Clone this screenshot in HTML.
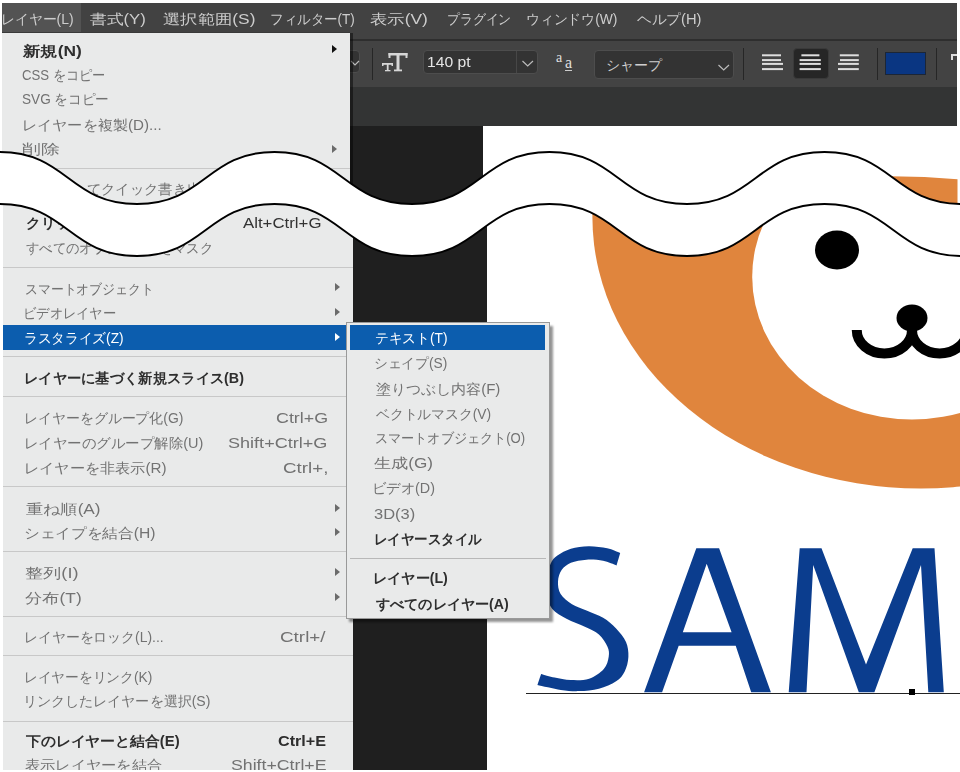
<!DOCTYPE html>
<html lang="ja"><head><meta charset="utf-8">
<style>
html,body{margin:0;padding:0;}
body{width:960px;height:772px;position:relative;overflow:hidden;background:#fff;font-family:"Liberation Sans",sans-serif;}
.abs,.t,.ar,.sep,.hl{position:absolute;}
.layer{position:absolute;left:0;top:0;width:960px;height:772px;}
.t{height:20px;line-height:20px;font-size:14px;color:#727272;white-space:nowrap;transform-origin:0 50%;}
.t.b{color:#2e2e2e;font-weight:bold;}
.t.w{color:#fff;}
.t.d{color:#333;}
.t.sc{font-size:15.5px;}
.t.mb{color:#cdcdcd;}
.ar{width:0;height:0;border-top:4.5px solid transparent;border-bottom:4.5px solid transparent;border-left:5px solid #666;}
.sep{height:1px;}
.hl{background:#0c5dae;}
.sam{font-size:200px;line-height:300px;color:#0b3d8e;transform-origin:0 0;white-space:nowrap;}
</style></head><body>
<div class="layer" style="clip-path:inset(0 0 568px 0)">
  <div class="abs" style="left:2px;top:3px;width:955px;height:36px;background:#424242"></div>
  <div class="abs" style="left:2px;top:39px;width:955px;height:1.6px;background:#2e2e2e"></div>
  <div class="abs" style="left:2px;top:3px;width:79px;height:30px;background:#535353"></div>
  <div class="abs" style="left:2px;top:40.6px;width:955px;height:46.4px;background:#434343"></div>
  <div class="abs" style="left:2px;top:87px;width:955px;height:39px;background:#333434"></div>
  <div class="abs" style="left:2px;top:126px;width:955px;height:646px;background:#1f1f1f"></div>
  <div class="abs" style="left:483px;top:126px;width:474px;height:646px;background:#fff"></div>
  <!-- toolbar -->
  <div class="abs" style="left:320px;top:50px;width:40px;height:23px;box-sizing:border-box;border:1px solid #4d4d4d;border-radius:4px;background:#333"></div>
  <svg class="abs" style="left:350px;top:55px" width="12" height="14"><path d="M1,6 L5,10 L9,6" fill="none" stroke="#bbb" stroke-width="1.2"/></svg>
  <div class="abs" style="left:372px;top:48px;width:1px;height:32px;background:#262626"></div>
  <svg class="abs" style="left:378px;top:50px" width="34" height="24">
    <g fill="#d6d6d6">
      <rect x="10.5" y="3" width="19" height="2.5"/><rect x="10.5" y="3" width="2" height="5"/><rect x="27.5" y="3" width="2" height="5"/>
      <rect x="18.5" y="3" width="3" height="18"/><rect x="16" y="19.5" width="8" height="1.8"/>
      <rect x="4" y="13" width="11" height="1.8"/><rect x="4" y="13" width="1.5" height="3"/><rect x="13.5" y="13" width="1.5" height="3"/>
      <rect x="8.8" y="13" width="1.8" height="8"/><rect x="7" y="20" width="5.5" height="1.3"/>
    </g>
  </svg>
  <div class="abs" style="left:423px;top:50px;width:115px;height:24px;box-sizing:border-box;border:1px solid #4d4d4d;border-radius:4px;background:#333"></div>
  <div class="abs" style="left:516px;top:51px;width:1px;height:22px;background:#474747"></div>
  <svg class="abs" style="left:520px;top:56px" width="16" height="12"><path d="M2.5,5 L7.7,10 L13,5" fill="none" stroke="#bbb" stroke-width="1.2"/></svg>
  <div class="abs" style="left:427px;top:53px;font-size:14px;line-height:18px;color:#e4e4e4;transform:scaleX(1.12);transform-origin:0 0">140 pt</div>
  <div class="abs" style="left:556px;top:51px;font-family:'Liberation Serif',serif;font-size:14px;line-height:14px;color:#e0e0e0">a</div>
  <div class="abs" style="left:565px;top:56px;font-family:'Liberation Serif',serif;font-size:16px;line-height:14px;color:#e0e0e0;border-bottom:1.2px solid #ccc">a</div>
  <div class="abs" style="left:594px;top:50px;width:140px;height:29px;box-sizing:border-box;border:1px solid #4d4d4d;border-radius:4px;background:#333"></div>
  <div class="abs" style="left:606px;top:55px;font-size:14px;line-height:20px;color:#cfcfcf">シャープ</div>
  <svg class="abs" style="left:716px;top:60px" width="16" height="12"><path d="M2.5,5 L7.7,10 L13,5" fill="none" stroke="#bbb" stroke-width="1.2"/></svg>
  <div class="abs" style="left:743px;top:48px;width:1px;height:32px;background:#262626"></div>
  <div class="abs" style="left:793px;top:48px;width:36px;height:31px;box-sizing:border-box;background:#262626;border:1px solid #3a3a3a;border-radius:4px"></div>
  <svg class="abs" style="left:755px;top:50px" width="110" height="26">
    <g fill="#dedede">
      <rect x="7" y="4.3" width="19" height="2"/><rect x="7" y="9.1" width="19" height="2"/><rect x="7" y="12.9" width="21" height="2"/><rect x="7" y="18.1" width="21" height="2"/>
      <rect x="46.4" y="4.3" width="18" height="2"/><rect x="44.6" y="9.1" width="21.2" height="2"/><rect x="44.6" y="12.9" width="21.2" height="2"/><rect x="44.6" y="18.1" width="21.2" height="2"/>
      <rect x="84.8" y="4.3" width="19" height="2"/><rect x="85" y="9.1" width="18.8" height="2"/><rect x="83" y="12.9" width="20.8" height="2"/><rect x="83" y="18.1" width="20.8" height="2"/>
    </g>
  </svg>
  <div class="abs" style="left:877px;top:48px;width:1px;height:32px;background:#262626"></div>
  <div class="abs" style="left:885px;top:51.5px;width:41px;height:23px;box-sizing:border-box;background:#0a3682;border:1px solid #1c2636"></div>
  <div class="abs" style="left:936px;top:48px;width:1px;height:32px;background:#262626"></div>
  <div class="abs" style="left:951px;top:54px;width:8px;height:2px;background:#ddd"></div>
  <div class="abs" style="left:951px;top:54px;width:2px;height:6px;background:#ddd"></div>
  <div class="abs" style="left:957px;top:0;width:3px;height:200px;background:#fff"></div>
  <!-- top menu panel -->
  <div class="abs" style="left:350px;top:33px;width:3px;height:180px;background:rgba(0,0,0,0.45)"></div>
  <div class="abs" style="left:2px;top:32px;width:348px;height:1px;background:#3a3a3a"></div>
  <div class="abs" style="left:2px;top:33px;width:348px;height:300px;background:#e9eaea"></div>
  <div class="t mb" id="t0" style="top:8.5px;left:1.01px;transform:scaleX(0.9929)">レイヤー(L)</div>
<div class="t mb" id="t1" style="top:8.5px;left:90.00px;transform:scaleX(1.1957)">書式(Y)</div>
<div class="t mb" id="t2" style="top:8.5px;left:163.16px;transform:scaleX(1.2384)">選択範囲(S)</div>
<div class="t mb" id="t3" style="top:8.5px;left:270.07px;transform:scaleX(0.9647)">フィルター(T)</div>
<div class="t mb" id="t4" style="top:8.5px;left:369.76px;transform:scaleX(1.2400)">表示(V)</div>
<div class="t mb" id="t5" style="top:8.5px;left:446.58px;transform:scaleX(0.9191)">プラグイン</div>
<div class="t mb" id="t6" style="top:8.5px;left:525.72px;transform:scaleX(0.9878)">ウィンドウ(W)</div>
<div class="t mb" id="t7" style="top:8.5px;left:637.00px;transform:scaleX(1.0492)">ヘルプ(H)</div>
<div class="t b" id="t8" style="top:41.0px;left:23.00px;transform:scaleX(1.2394)">新規(N)</div>
<div class="t " id="t9" style="top:65.0px;left:22.06px;transform:scaleX(0.9425)">CSS をコピー</div>
<div class="t " id="t10" style="top:89.0px;left:22.03px;transform:scaleX(0.9713)">SVG をコピー</div>
<div class="t " id="t11" style="top:114.7px;left:21.59px;transform:scaleX(1.0813)">レイヤーを複製(D)...</div>
<div class="t " id="t12" style="top:139.0px;left:22.40px;transform:scaleX(1.3462)">削除</div>
<div class="t " id="t13" style="top:178.8px;left:22.73px;transform:scaleX(1.0230)">PNG としてクイック書き出し</div>

  <div class="ar" style="top:44.5px;left:332px;border-left-color:#111"></div>
<div class="ar" style="top:144.5px;left:332px;border-left-color:#6b6b6b"></div>
<div class="sep" style="top:167.5px;left:2px;width:348px;background:#c8c8c8"></div>

  <svg class="abs" style="left:0;top:0" width="960" height="230"><path d="M891,176.3 Q925,176.4 957.5,179.2 L957.5,215 L891,215 Z" fill="#e0853d"/></svg>
</div>
<div class="layer" style="clip-path:inset(204px 0 0 0)">
  <div class="abs" style="left:0;top:0;width:960px;height:772px;background:#fff"></div>
  <div class="abs" style="left:3px;top:126px;width:954px;height:644px;background:#1f1f1f"></div>
  <div class="abs" style="left:487px;top:126px;width:473px;height:646px;background:#fff"></div>
  <svg class="abs" style="left:0;top:0" width="960" height="772">
    <ellipse cx="920.9" cy="217.1" rx="328.5" ry="271.4" fill="#e0853d"/>
    <ellipse cx="911.9" cy="276.7" rx="159.7" ry="142.9" fill="#fff"/>
    <ellipse cx="837" cy="250" rx="22" ry="19.5" fill="#000"/>
    <ellipse cx="912" cy="318" rx="15.5" ry="13.5" fill="#000"/>
    <path d="M856.75,330 A27.6,23.5 0 0 0 912,330 A27.6,23.5 0 0 0 967.25,330" fill="none" stroke="#000" stroke-width="10"/>
  </svg>
  <svg class="abs" style="left:0;top:0" width="960" height="772">
    <path d="M620.2,553.0 C618.0,552.2 612.5,549.4 607.2,548.3 C601.9,547.2 594.7,546.1 588.6,546.2 C582.5,546.3 576.1,547.2 570.9,548.8 C565.7,550.4 560.8,553.1 557.4,555.6 C554.0,558.1 552.3,559.9 550.5,564.0 C548.7,568.1 547.0,574.7 546.5,580.0 C546.0,585.3 546.5,591.2 547.5,596.0 C548.5,600.8 549.1,605.2 552.3,609.0 C555.5,612.8 561.0,615.8 566.5,618.8 C572.0,621.8 580.0,624.5 585.4,627.1 C590.8,629.7 595.2,631.2 598.9,634.5 C602.6,637.8 605.9,643.1 607.5,646.8 C609.1,650.5 609.3,653.0 608.7,656.7 C608.1,660.4 607.1,665.3 603.8,669.0 C600.5,672.7 594.6,676.9 589.1,678.8 C583.6,680.6 576.4,680.3 570.6,680.1 C564.9,679.9 559.5,678.6 554.6,677.6 C549.7,676.6 543.4,674.5 541.1,673.9 C540.5,675.8 538.0,683.1 537.4,685.0 C541.3,685.8 553.8,688.9 560.8,689.9 C567.8,690.9 572.9,691.3 579.2,691.1 C585.6,690.9 592.8,690.3 598.9,688.7 C605.0,687.1 611.8,684.2 616.1,681.3 C620.4,678.4 622.7,675.5 624.7,671.4 C626.8,667.3 628.2,661.6 628.4,656.7 C628.6,651.8 628.0,646.6 626.0,641.9 C624.0,637.2 619.9,632.4 616.1,628.4 C612.3,624.4 608.0,620.8 603.1,617.8 C598.2,614.8 591.7,612.8 586.5,610.5 C581.3,608.2 576.3,607.0 572.0,604.3 C567.7,601.5 562.9,597.8 560.6,594.0 C558.3,590.2 557.8,585.5 558.0,581.5 C558.2,577.5 559.5,573.2 561.6,570.1 C563.8,567.0 566.8,564.5 570.9,562.8 C575.0,561.1 581.1,560.1 586.5,559.7 C591.9,559.4 598.1,559.8 603.1,560.7 C608.1,561.7 614.4,564.6 616.6,565.4 C617.2,563.3 619.6,555.1 620.2,553.0 Z" fill="#0b3d8e"/>
    <path fill-rule="evenodd" fill="#0b3d8e" d="M644.1,692.3 L696.3,548.3 L719.1,548.3 L770.9,692.3 L751.2,692.3 L735.7,645.7 L678.7,645.7 L662.1,692.3 Z M706.7,563.8 L731.6,632.2 L682.8,632.2 Z"/>
    <path fill="#0b3d8e" d="M788.7,692.3 L799.7,548.3 L821.5,548.3 L866,664.4 L912.7,548.3 L934.5,548.3 L943.8,692.3 L928.3,692.3 L921,564.9 L874.4,692.3 L858.8,692.3 L813.2,564.9 L806.5,692.3 Z"/>
  </svg>
  <div class="abs" style="left:526px;top:692.5px;width:434px;height:1px;background:#222"></div>
  <div class="abs" style="left:909px;top:689px;width:6px;height:6px;background:#000"></div>
  <div class="abs" style="left:3px;top:150px;width:350px;height:620px;background:#e9eaea"></div>
  <div class="sep" style="top:266.5px;left:3px;width:350px;background:#c8c8c8"></div>
<div class="sep" style="top:356.0px;left:3px;width:350px;background:#c8c8c8"></div>
<div class="sep" style="top:395.6px;left:3px;width:350px;background:#c8c8c8"></div>
<div class="sep" style="top:485.6px;left:3px;width:350px;background:#c8c8c8"></div>
<div class="sep" style="top:551.0px;left:3px;width:350px;background:#c8c8c8"></div>
<div class="sep" style="top:615.6px;left:3px;width:350px;background:#c8c8c8"></div>
<div class="sep" style="top:655.0px;left:3px;width:350px;background:#c8c8c8"></div>
<div class="sep" style="top:720.6px;left:3px;width:350px;background:#c8c8c8"></div>
<div class="ar" style="top:283.0px;left:334.5px;border-left-color:#6b6b6b"></div>
<div class="ar" style="top:307.5px;left:334.5px;border-left-color:#6b6b6b"></div>
<div class="ar" style="top:503.5px;left:334.5px;border-left-color:#6b6b6b"></div>
<div class="ar" style="top:527.5px;left:334.5px;border-left-color:#6b6b6b"></div>
<div class="ar" style="top:568.0px;left:334.5px;border-left-color:#6b6b6b"></div>
<div class="ar" style="top:592.5px;left:334.5px;border-left-color:#6b6b6b"></div>

  <div class="hl" style="left:3px;top:325px;width:347px;height:25px"></div><div class="ar" style="top:332.5px;left:334.5px;border-left-color:#fff"></div>

  <div class="t b" id="t14" style="top:212.5px;left:25.96px;transform:scaleX(1.0359)">クリッピングマスクを作成</div>
<div class="t d sc" id="t15" style="top:212.5px;left:242.70px;transform:scaleX(1.0844)">Alt+Ctrl+G</div>
<div class="t " id="t16" style="top:237.7px;left:26.25px;transform:scaleX(0.9536)">すべてのオブジェクトをマスク</div>
<div class="t " id="t17" style="top:278.6px;left:25.33px;transform:scaleX(0.9191)">スマートオブジェクト</div>
<div class="t " id="t18" style="top:303.0px;left:23.40px;transform:scaleX(0.9495)">ビデオレイヤー</div>
<div class="t w" id="t19" style="top:327.5px;left:24.30px;transform:scaleX(0.9773)">ラスタライズ(Z)</div>
<div class="t b" id="t20" style="top:367.5px;left:24.21px;transform:scaleX(1.0209)">レイヤーに基づく新規スライス(B)</div>
<div class="t " id="t21" style="top:407.5px;left:24.26px;transform:scaleX(0.9952)">レイヤーをグループ化(G)</div>
<div class="t sc" id="t22" style="top:407.5px;left:275.55px;transform:scaleX(1.1512)">Ctrl+G</div>
<div class="t " id="t23" style="top:432.5px;left:24.18px;transform:scaleX(1.0336)">レイヤーのグループ解除(U)</div>
<div class="t sc" id="t24" style="top:432.5px;left:228.33px;transform:scaleX(1.1651)">Shift+Ctrl+G</div>
<div class="t " id="t25" style="top:458.0px;left:24.08px;transform:scaleX(1.0853)">レイヤーを非表示(R)</div>
<div class="t sc" id="t26" style="top:458.0px;left:282.59px;transform:scaleX(1.2114)">Ctrl+,</div>
<div class="t " id="t27" style="top:499.0px;left:26.25px;transform:scaleX(1.2292)">重ね順(A)</div>
<div class="t " id="t28" style="top:522.5px;left:24.01px;transform:scaleX(1.1196)">シェイプを結合(H)</div>
<div class="t " id="t29" style="top:563.0px;left:24.95px;transform:scaleX(1.2987)">整列(I)</div>
<div class="t " id="t30" style="top:588.0px;left:25.01px;transform:scaleX(1.2352)">分布(T)</div>
<div class="t " id="t31" style="top:627.0px;left:24.27px;transform:scaleX(0.9917)">レイヤーをロック(L)...</div>
<div class="t sc" id="t32" style="top:627.0px;left:279.98px;transform:scaleX(1.2162)">Ctrl+/</div>
<div class="t " id="t33" style="top:666.7px;left:24.29px;transform:scaleX(0.9816)">レイヤーをリンク(K)</div>
<div class="t " id="t34" style="top:690.7px;left:23.24px;transform:scaleX(1.0041)">リンクしたレイヤーを選択(S)</div>
<div class="t b" id="t35" style="top:730.5px;left:26.25px;transform:scaleX(1.0622)">下のレイヤーと結合(E)</div>
<div class="t b sc" id="t36" style="top:730.5px;left:278.26px;transform:scaleX(1.0422)">Ctrl+E</div>
<div class="t " id="t37" style="top:754.5px;left:25.16px;transform:scaleX(1.0883)">表示レイヤーを結合</div>
<div class="t sc" id="t38" style="top:754.5px;left:231.36px;transform:scaleX(1.1427)">Shift+Ctrl+E</div>

  <div class="abs" style="left:349px;top:326px;width:204px;height:296px;background:rgba(0,0,0,0.42);filter:blur(1px)"></div>
  <div class="abs" style="left:346px;top:322px;width:204px;height:297px;box-sizing:border-box;background:#e9eaea;border:1px solid #999"></div>
  <div class="hl" style="left:350px;top:324.6px;width:195px;height:25.4px"></div><div class="sep" style="top:558.0px;left:350px;width:196px;background:#b8b8b8"></div>

  <div class="t w" id="t39" style="top:327.5px;left:374.52px;transform:scaleX(0.9819)">テキスト(T)</div>
<div class="t " id="t40" style="top:353.0px;left:373.54px;transform:scaleX(0.9819)">シェイプ(S)</div>
<div class="t " id="t41" style="top:378.6px;left:375.50px;transform:scaleX(1.0730)">塗りつぶし内容(F)</div>
<div class="t " id="t42" style="top:403.5px;left:375.50px;transform:scaleX(0.9871)">ベクトルマスク(V)</div>
<div class="t " id="t43" style="top:428.0px;left:374.56px;transform:scaleX(0.9373)">スマートオブジェクト(O)</div>
<div class="t " id="t44" style="top:453.0px;left:374.28px;transform:scaleX(1.2239)">生成(G)</div>
<div class="t " id="t45" style="top:478.0px;left:372.43px;transform:scaleX(1.0241)">ビデオ(D)</div>
<div class="t " id="t46" style="top:504.0px;left:374.32px;transform:scaleX(1.1758)">3D(3)</div>
<div class="t b" id="t47" style="top:528.6px;left:373.57px;transform:scaleX(0.9627)">レイヤースタイル</div>
<div class="t b" id="t48" style="top:568.0px;left:373.47px;transform:scaleX(1.0127)">レイヤー(L)</div>
<div class="t b" id="t49" style="top:593.7px;left:375.50px;transform:scaleX(1.0099)">すべてのレイヤー(A)</div>

  <div class="abs" style="left:0;top:770px;width:960px;height:2px;background:#fff"></div>
</div>
<svg class="layer" width="960" height="772" style="position:absolute;left:0;top:0">
  <path d="M-275.50,152.00 C-207.50,152.00 -206.00,204.00 -138.00,204.00 C-70.00,204.00 -68.50,152.00 -0.50,152.00 C67.50,152.00 69.00,204.00 137.00,204.00 C205.00,204.00 206.50,152.00 274.50,152.00 C342.50,152.00 344.00,204.00 412.00,204.00 C480.00,204.00 481.50,152.00 549.50,152.00 C617.50,152.00 619.00,204.00 687.00,204.00 C755.00,204.00 756.50,152.00 824.50,152.00 C892.50,152.00 894.00,204.00 962.00,204.00 C1030.00,204.00 1031.50,152.00 1099.50,152.00 C1167.50,152.00 1169.00,204.00 1237.00,204.00 C1305.00,204.00 1306.50,152.00 1374.50,152.00 L1374.50,204.00 C1306.50,204.00 1305.00,256.00 1237.00,256.00 C1169.00,256.00 1167.50,204.00 1099.50,204.00 C1031.50,204.00 1030.00,256.00 962.00,256.00 C894.00,256.00 892.50,204.00 824.50,204.00 C756.50,204.00 755.00,256.00 687.00,256.00 C619.00,256.00 617.50,204.00 549.50,204.00 C481.50,204.00 480.00,256.00 412.00,256.00 C344.00,256.00 342.50,204.00 274.50,204.00 C206.50,204.00 205.00,256.00 137.00,256.00 C69.00,256.00 67.50,204.00 -0.50,204.00 C-68.50,204.00 -70.00,256.00 -138.00,256.00 C-206.00,256.00 -207.50,204.00 -275.50,204.00 Z" fill="#fff"/>
  <path d="M-275.50,152.00 C-207.50,152.00 -206.00,204.00 -138.00,204.00 C-70.00,204.00 -68.50,152.00 -0.50,152.00 C67.50,152.00 69.00,204.00 137.00,204.00 C205.00,204.00 206.50,152.00 274.50,152.00 C342.50,152.00 344.00,204.00 412.00,204.00 C480.00,204.00 481.50,152.00 549.50,152.00 C617.50,152.00 619.00,204.00 687.00,204.00 C755.00,204.00 756.50,152.00 824.50,152.00 C892.50,152.00 894.00,204.00 962.00,204.00 C1030.00,204.00 1031.50,152.00 1099.50,152.00 C1167.50,152.00 1169.00,204.00 1237.00,204.00 C1305.00,204.00 1306.50,152.00 1374.50,152.00" fill="none" stroke="#000" stroke-width="1.9"/>
  <path d="M-275.50,204.00 C-207.50,204.00 -206.00,256.00 -138.00,256.00 C-70.00,256.00 -68.50,204.00 -0.50,204.00 C67.50,204.00 69.00,256.00 137.00,256.00 C205.00,256.00 206.50,204.00 274.50,204.00 C342.50,204.00 344.00,256.00 412.00,256.00 C480.00,256.00 481.50,204.00 549.50,204.00 C617.50,204.00 619.00,256.00 687.00,256.00 C755.00,256.00 756.50,204.00 824.50,204.00 C892.50,204.00 894.00,256.00 962.00,256.00 C1030.00,256.00 1031.50,204.00 1099.50,204.00 C1167.50,204.00 1169.00,256.00 1237.00,256.00 C1305.00,256.00 1306.50,204.00 1374.50,204.00" fill="none" stroke="#000" stroke-width="1.9"/>
</svg>
</body></html>
